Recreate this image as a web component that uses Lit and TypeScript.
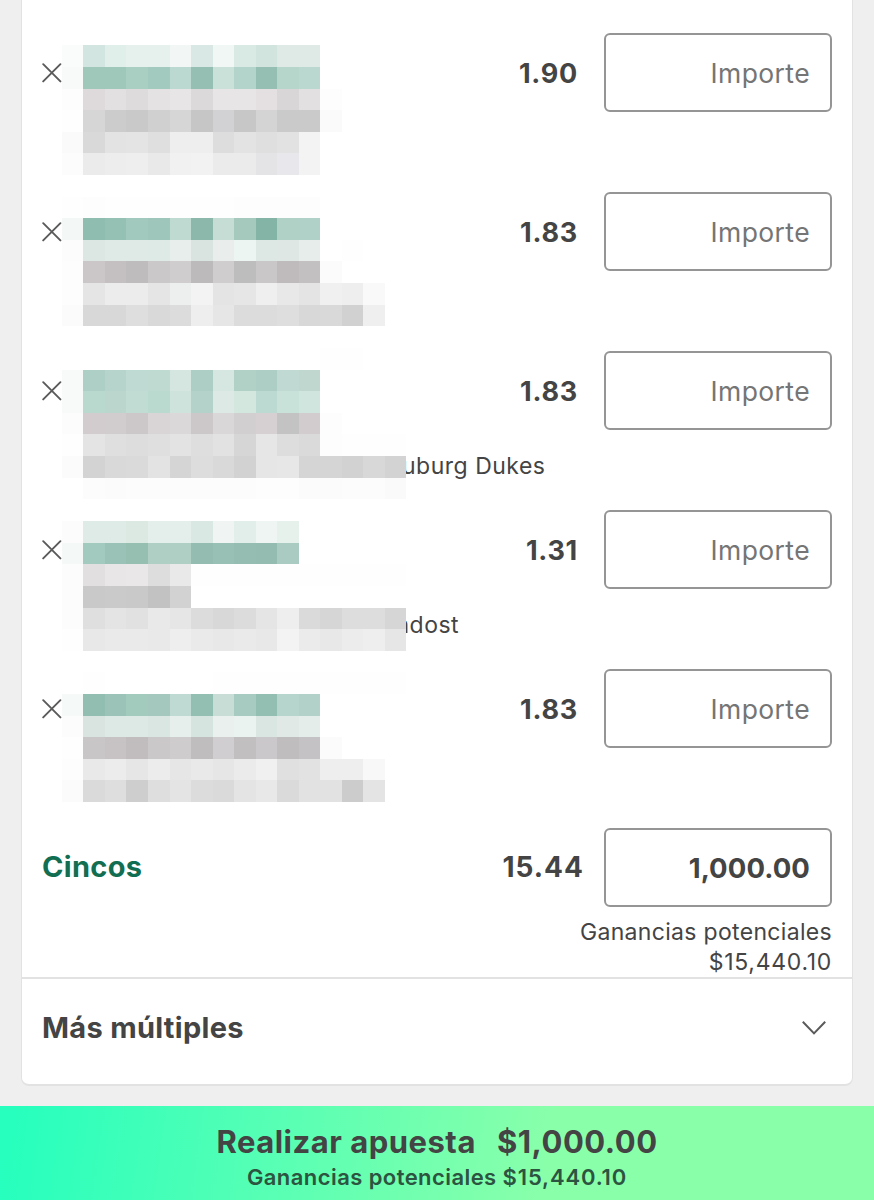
import { LitElement, html, css, svg } from "lit";
import { customElement, property } from "lit/decorators.js";

interface Selection {
  odds: string;
  /** Distance from the top of the row to the first band of cells. */
  top: number;
  /** One string of space separated colours per band, "." leaves a cell empty. */
  cells: string[];
  tail?: string;
}

const SELECTIONS: Selection[] = [
  {
    odds: "1.90",
    top: 45.4,
    cells: [
      "fafcfb d3e5e0 e1efea e6f0ed e6f0ed f2f7f6 dae8e5 f0f7f5 d9e9e3 d1e5de dfeae6 dfeae6",
      "f7faf9 9fc7ba 9fc7ba a9cfc3 a2cabe bbd9d0 96bfb3 c9e1d9 b3d4ca 95bfb2 b6d5cb bad8cf",
      "fdfdfd dedadc e3e0e1 dedbdc e4e2e3 e7e5e6 dcd9da e8e5e7 e8e5e7 e4e0e1 d8d6d7 e3e0e2 fdfdfd",
      "fefefe d6d6d6 cccccc c9c9c9 d0d0d0 d6d6d6 c6c6c6 d2d2d5 c7c7c7 d4d4d4 cacaca cacaca fafafa",
      "fafafa d9d9d9 e3e3e3 e4e4e4 dfdfdf eeeeee eeeeee dddddd e3e3e3 dfdfdf e2e2e2 f3f3f3",
      "fcfcfc ebebeb ededed eeeeee e9e9e9 f1f1f1 f2f2f2 ebebeb ebebeb e4e4e6 e8e8ec f3f3f4",
    ],
  },
  {
    odds: "1.83",
    top: 37.6,
    cells: [
      "fefefe fcfdfc fefefe fefefe fefefe fefefe fefefe fefefe fcfdfc fcfdfc fdfdfd fdfdfd",
      "f3f7f5 8fbeb0 95c1b4 a2c9bd 9fc6ba bfdad1 8bb8aa c6ddd6 a5c9bd 84b4a6 afd1c6 b0d1c7",
      "fcfcfc dce6e2 dfeae6 dfeae6 deeae5 e8eeec d9e3df e9eeec edf5f2 dde7e3 dee7e3 e7edeb . fefefe",
      "fdfdfd cbc7c9 c4c0c2 bfbcbe cbc8c9 cfcdce bdbabb d0cdcf bebdbe cac7c8 bfbbbd c3c0c1 fbfbfb",
      "fdfdfd e5e5e5 ececec ececec e5e5e5 edefee f3f3f3 e4e4e4 e6e6e6 efefef e8e8e8 e4e4e4 f0f0f0 eeeeee f9f9f9",
      "fbfbfb d8d8d8 d8d8d8 dedede d9d9d9 dcdcdc eeeeee e6e6e6 dcdcdc dcdcdc dedede d8d8d8 d9d9d9 d1d1d1 efefef",
    ],
  },
  {
    odds: "1.83",
    top: 29.9,
    cells: [
      ". . . . . . . . . . . . fefefe fefefe",
      "f8faf9 aecfc5 b6d4cb bfdad2 bedad1 d5e6e1 adcec4 d6e6e1 b1d0c6 adcec4 c0d9d2 c0d7d0",
      "f7faf9 b9d8ce bad6cd c1dcd3 bad9cf cfe3dd b4d2c9 dce9e4 d3e7df bcdad1 c8e2da d1e5df",
      "fcfcfc d3cccf d1ccce ccc8ca d9d4d6 dad8d9 ccc8ca d9d7d8 d1cfd0 d6d0d2 c4c3c3 d2ccce fdfdfd",
      "fefefe e4e4e4 dfdfdf dddddd dfdfdf e3e3e3 dedede e2e2e2 d6d6d6 e6e6e6 dddddd dadada fdfdfd fefefe fefefe fefefe",
      "fbfbfb d3d3d3 d9d9d9 dadada e3e3e3 d5d5d5 dddddd d9d9d9 d2d2d2 e6e6e6 e7e7e7 d5d5d5 d5d5d5 d2d2d2 d8d8d8 d3d3d3",
      ". fcfcfc fbfbfb fcfcfc fcfcfc fcfcfc fcfcfc fcfcfc fcfcfc fdfdfd fdfdfd fbfbfb fbfbfb fcfcfc fcfcfc fafafa",
    ],
    tail: "uburg Dukes",
  },
  {
    odds: "1.31",
    top: 44.2,
    cells: [
      "fbfcfb dfebe6 dfebe6 dce9e3 e4eeea e4eeea d9e8e2 f0f5f4 e2eeea eef5f2 e7f1ec",
      "f4f9f7 a3cabf 9bc2b7 96bfb2 afcfc4 afcfc4 94bcb0 98c0b4 95bdb1 94bcb0 aacbc1",
      "fcfcfc e2dfe1 e9e6e7 eae7e8 dddddd e9e9e9 fefefe fefefe fefefe fefefe fefefe fefefe fefefe fefefe fefefe fefefe",
      "fcfcfc c9c9c9 cacaca c9c9c9 c2c2c2 d2d2d2",
      "fcfcfc dfdfdf e4e4e4 e1e1e1 e9e9e9 e6e6e6 dcdcdc d8d8d8 dcdcdc e5e5e5 eeeeee dadada d6d6d6 dddddd dddddd d6d6d6",
      "fefefe e8e8e8 eaeaea eaeaea e9e9e9 eeeeee eaeaea e8e8e8 eaeaea e8e8e8 f3f3f3 ebebeb e8e8e8 ececec eeeeee e6e6e6",
    ],
    tail: "ndost",
  },
  {
    odds: "1.83",
    top: 36.4,
    cells: [
      ". fefefe . . . . . fefefe fefefe fefefe fefefe fefefe fefefe fefefe fefefe fefefe",
      "f5f9f7 92bdb1 9bc3b7 a2cbbd a4c8bd bfdad3 93bfb2 c7ddd6 a7cbc0 93bfb2 b6d6cd b2d2c9",
      "fcfcfc d9e4e0 dce9e4 dce9e4 d9e6e2 e6efec d5e4df eaf0ee eaf3f0 dae6e2 e0e9e5 e4edea",
      "fefefe c9c6c8 c7c3c5 c1bdbf cbc8c9 cecccd c0bdbf d0ced0 c1bfc0 cac8ca c0bdbf c4c2c4 fbfbfb",
      "fdfdfd e9e9e9 ececec e6e6e6 ececec e6e6e6 e9e9e9 e6e6e6 ebebeb f0f0f0 e0e0e0 e2e2e2 eeeeee eeeeee f8f8f8",
      "fbfbfb dadada dedede cecece dedede e4e4e4 dcdcdc dadada e4e4e4 e8e8e8 dadada e2e2e2 e2e2e2 cccccc e4e4e4",
    ],
  },
];

@customElement("redacted-block")
class RedactedBlock extends LitElement {
  @property({ attribute: false }) cells: string[] = [];
  /** Sub-pixel remainder of the block's top edge. */
  @property({ type: Number }) shift = 0;

  static styles = css`
    :host {
      display: block;
    }
    .grid {
      display: block;
    }
  `;

  render() {
    const w = 21.53;
    const h = 21.61;
    return html`<svg class="grid" width="346" height="153" aria-hidden="true" shape-rendering="crispEdges">
      ${this.cells.map((band, y) =>
        band.split(" ").map((c, x) =>
          c === "."
            ? ""
            : svg`<rect x=${x * w - 0.1} y=${y * h + this.shift} width=${w} height=${h} fill=${"#" + c}></rect>`
        )
      )}
    </svg>`;
  }
}

@customElement("bet-row")
class BetRow extends LitElement {
  @property({ attribute: false }) item!: Selection;

  static styles = css`
    :host {
      display: block;
    }
    .row {
      position: relative;
      display: grid;
      grid-template-columns: 20px 1fr 100px 228px;
      height: 159px;
      padding: 33px 20px 0 20px;
      box-sizing: border-box;
    }
    .close {
      width: 20px;
      height: 20px;
      margin-top: 30px;
    }
    .odds {
      grid-column: 3;
      padding-right: 26px;
      text-align: right;
      font-size: 27px;
      font-weight: 700;
      line-height: 82px;
      letter-spacing: 0.75px;
    }
    .stake {
      box-sizing: border-box;
      height: 79px;
      border: 2px solid #959595;
      border-radius: 6px;
      padding-right: 20px;
      text-align: right;
      line-height: 76px;
      font-size: 26.5px;
      letter-spacing: 0.4px;
      color: #757575;
    }
    .cover {
      position: absolute;
      left: 40px;
    }
    .tail {
      position: absolute;
      left: 380px;
      top: 133px;
      font-size: 23px;
      line-height: 30px;
      letter-spacing: 0.5px;
    }
    .short {
      left: 373.5px;
    }
  `;

  render() {
    const { odds, top, cells, tail } = this.item;
    const whole = Math.floor(top);
    return html`<div class="row">
      <svg class="close" viewBox="0 0 20 20" fill="none" stroke="#5a5a5a" stroke-width="1.9" stroke-linecap="round">
        <path d="M1.2 1.2 18.4 18.4M18.4 1.2 1.2 18.4"></path>
      </svg>
      <div class="odds">${odds}</div>
      <div class="stake">Importe</div>
      ${tail ? html`<div class="tail ${tail.length < 6 ? "short" : ""}">${tail}</div>` : ""}
      <redacted-block class="cover" style="top:${whole}px" .shift=${top - whole} .cells=${cells}></redacted-block>
    </div>`;
  }
}

@customElement("app-root")
class AppRoot extends LitElement {
  static styles = css`
    :host {
      display: flex;
      flex-direction: column;
      height: 1200px;
      overflow: hidden;
      background: #efefef;
      color: #444;
      font-family: Inter, "Liberation Sans", sans-serif;
      white-space: nowrap;
    }
    .card {
      box-sizing: border-box;
      height: 1086px;
      margin: 0 21px 20px;
      background: #fff;
      border: solid #e2e2e2;
      border-width: 0 1px 2px;
      border-radius: 0 0 8px 8px;
    }
    .multiple {
      display: grid;
      grid-template-columns: 1fr auto 228px;
      height: 182px;
      padding: 33px 20px 0;
      box-sizing: border-box;
      font-size: 28px;
      font-weight: 700;
      line-height: 79px;
    }
    .name {
      color: #126e51;
      font-size: 29px;
      line-height: 77px;
      letter-spacing: 0.3px;
    }
    .total {
      padding-right: 20px;
      letter-spacing: 1px;
    }
    .amount {
      box-sizing: border-box;
      height: 79px;
      border: 2px solid #959595;
      border-radius: 6px;
      padding-right: 20px;
      text-align: right;
      line-height: 76px;
      font-size: 27.5px;
      letter-spacing: 0.1px;
    }
    .returns {
      grid-column: 1 / -1;
      text-align: right;
      font-size: 23px;
      font-weight: 400;
      line-height: 30px;
      letter-spacing: 0.32px;
      padding-top: 10px;
    }
    .returns .value {
      letter-spacing: 0.7px;
    }
    .more {
      display: flex;
      align-items: center;
      justify-content: space-between;
      height: 106px;
      box-sizing: border-box;
      padding: 0 26px 6px 20px;
      border-top: 2px solid #e2e2e2;
      font-size: 29px;
      font-weight: 700;
    }
    .label {
      letter-spacing: 0.3px;
      padding-bottom: 2px;
    }
    .chevron {
      width: 24px;
      height: 14px;
    }
    .place {
      flex: 1;
      display: flex;
      flex-direction: column;
      align-items: center;
      background: linear-gradient(98deg, #26ffbe 1%, #8affaa 63%);
      font-weight: 700;
    }
    .action {
      display: flex;
      gap: 21px;
      padding-top: 16px;
      font-size: 31px;
      line-height: 40px;
      letter-spacing: 0.5px;
    }
    .note {
      font-size: 22px;
      line-height: 30px;
      font-weight: 600;
      color: #2c5440;
      letter-spacing: 0.43px;
    }
    .note .value {
      letter-spacing: 0.85px;
    }
  `;

  render() {
    return html`
      <section class="card">
        ${SELECTIONS.map((s) => html`<bet-row .item=${s}></bet-row>`)}
        <div class="multiple">
          <div class="name">Cincos</div>
          <div class="total">15.44</div>
          <div class="amount">1,000.00</div>
          <div class="returns">Ganancias potenciales<br /><span class="value">$15,440.10</span></div>
        </div>
        <div class="more">
          <span class="label">Más múltiples</span>
          <svg class="chevron" viewBox="0 0 24 14" fill="none" stroke="#5a5a5a" stroke-width="2">
            <path d="M.8 .8 12 12.4 23.2 .8"></path>
          </svg>
        </div>
      </section>
      <footer class="place">
        <div class="action"><span>Realizar apuesta</span><span class="sum">$1,000.00</span></div>
        <div class="note">Ganancias potenciales <span class="value">$15,440.10</span></div>
      </footer>
    `;
  }
}
